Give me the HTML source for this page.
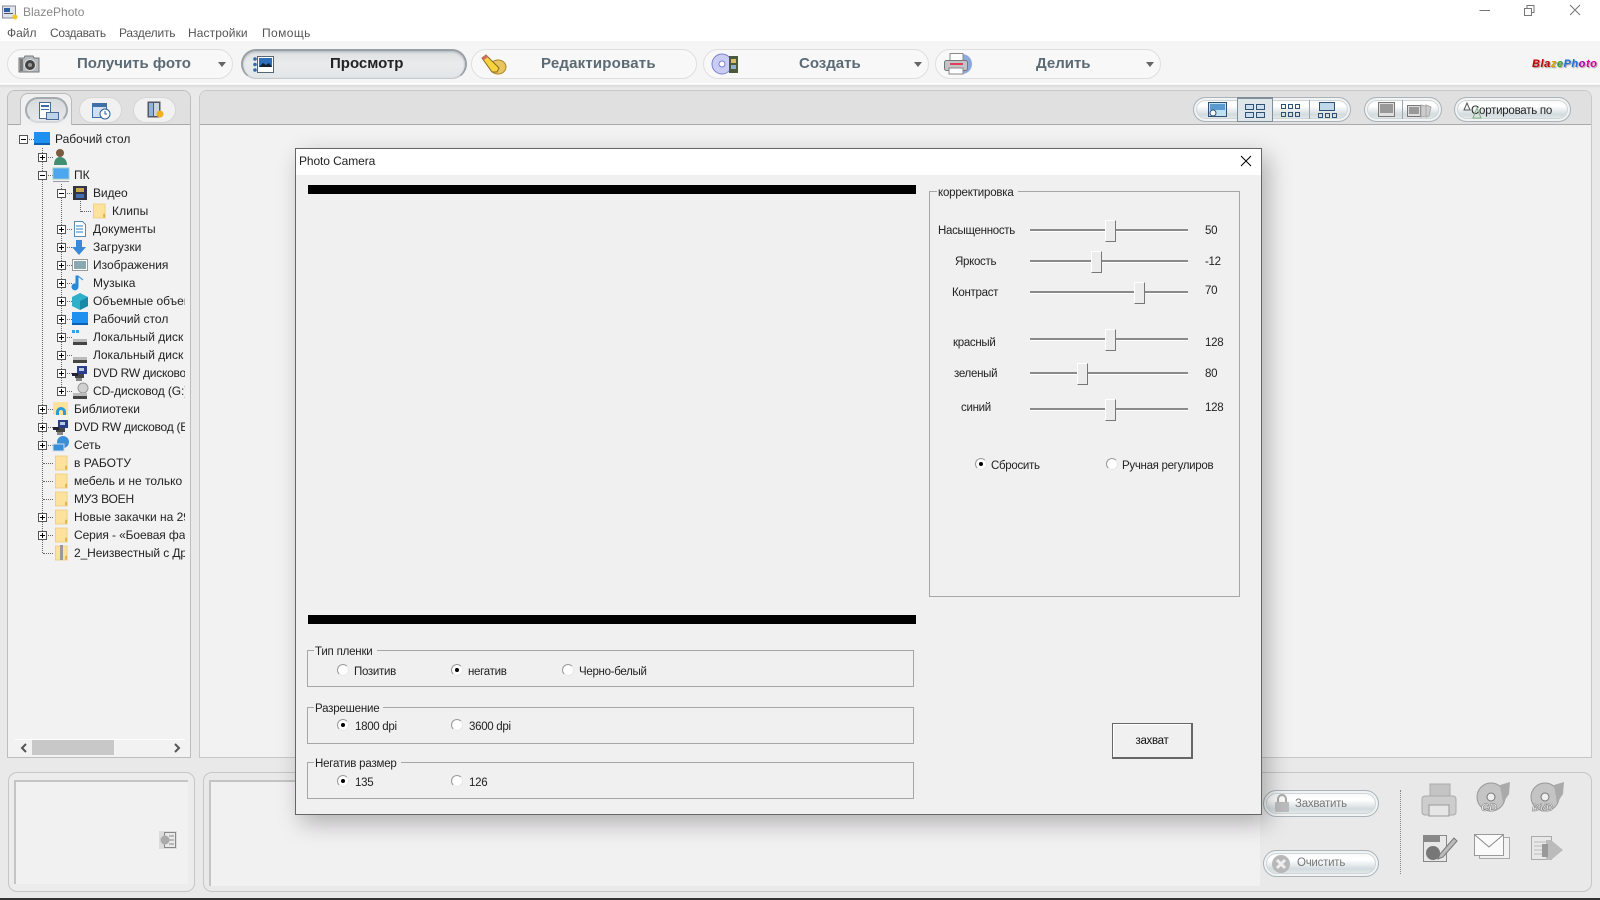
<!DOCTYPE html>
<html lang="ru"><head><meta charset="utf-8"><title>BlazePhoto</title>
<style>
*{box-sizing:border-box}
html,body{margin:0;padding:0;width:1600px;height:900px;overflow:hidden;background:#e9e9e9;font:12px/16px "Liberation Sans","Noto Sans CJK SC",sans-serif;color:#222}
.a,.t,.r,.e,.pill,.gl,.s,.th,.gb{position:absolute}
.t{white-space:nowrap}
.d{font-size:11.5px;letter-spacing:-.3px;margin-top:1px}
.pill{top:49px;height:30px;width:226px;border:1px solid #dfdfdf;border-radius:15px;background:#f8f8f8}
.pt{position:absolute;top:55px;font-weight:bold;font-size:15px;line-height:18px;color:#5b6a75;white-space:nowrap}
.arr{position:absolute;top:62px;width:0;height:0;border:4px solid transparent;border-top:5px solid #666;border-bottom:0}
.gl{border:1px solid #a9b3b8;border-radius:14px;box-shadow:inset 0 0 0 2px #f2f4f4,inset 0 0 0 3px #cfd6d9;background:linear-gradient(#f6f7f7 0,#fff 35%,#d3dbde 72%,#eef1f1 100%)}
.s{left:1030px;width:158px;height:3px;background:#8a8a8a;border-bottom:1px solid #fff}
.th{width:11px;height:22px;background:#ececec;border:1px solid;border-color:#fff #777 #777 #fff}
.r{width:12px;height:12px;border-radius:50%;background:#fff;border:1px solid #999;border-right-color:#e8e8e8;border-bottom-color:#e8e8e8}
.r.on::after{content:"";position:absolute;left:3px;top:3px;width:4px;height:4px;border-radius:50%;background:#000}
.gb{border:1px solid #a6a6a6}
.lg{position:absolute;background:#f0f0f0;padding:0 4px 0 1px;white-space:nowrap;color:#222;font-size:11.5px;letter-spacing:-.2px;margin-top:1px}
.e{width:9px;height:9px;border:1px solid #555;background:#fff}
.e::before{content:"";position:absolute;left:1px;top:3px;width:5px;height:1px;background:#000}
.e.p::after{content:"";position:absolute;left:3px;top:1px;width:1px;height:5px;background:#000}
.dv{position:absolute;border-left:1px dotted #666}
.dh{position:absolute;border-top:1px dotted #666;height:0}
#tree .t{color:#222}
</style></head><body>

<svg width="0" height="0" style="position:absolute"><defs>
<symbol id="fold" viewBox="0 0 14 16"><rect x="0.5" y="0.5" width="12.5" height="15" fill="#fce29a" stroke="#ecd084"/><rect x="11" y="11" width="2" height="4" fill="#e0b040"/></symbol>
<symbol id="desk" viewBox="0 0 16 14"><rect width="16" height="12" fill="#1e90f0"/><rect y="11" width="16" height="2" fill="#0f5fb0"/></symbol>
<symbol id="dvd" viewBox="0 0 16 16"><rect x="5" y="1" width="10" height="8" fill="#2a3f8c"/><rect x="7" y="3" width="5" height="3" fill="#bcd"/><rect x="3" y="9" width="9" height="4" fill="#444"/><rect x="0" y="8" width="6" height="3" fill="#223"/><rect x="4" y="13" width="6" height="3" fill="#888"/></symbol>
<symbol id="hdd" viewBox="0 0 16 16"><rect x="1" y="9" width="14" height="3" fill="#bbb"/><rect x="1" y="12" width="14" height="3" fill="#444"/></symbol>
</defs></svg>

<!-- title bar -->
<div class="a" style="left:0;top:0;width:1600px;height:41px;background:#fff"></div>
<svg class="a" style="left:2px;top:4px" width="16" height="16"><rect x="0.5" y="2" width="13" height="12" fill="#dfe4ea" stroke="#889"/><rect x="2" y="4" width="6" height="4" fill="#2b5f9e"/><rect x="2" y="9" width="9" height="1" fill="#556"/><circle cx="13" cy="13" r="2.500" fill="#f3c623"/></svg>
<div class="t" style="left:23px;top:4px;color:#888;font-size:12px">BlazePhoto</div>
<div class="t" style="left:7px;top:25px;color:#555">Файл</div>
<div class="t" style="left:50px;top:25px;color:#555;letter-spacing:-.3px">Создавать</div>
<div class="t" style="left:119px;top:25px;color:#555;letter-spacing:-.2px">Разделить</div>
<div class="t" style="left:188px;top:25px;color:#555;letter-spacing:.1px">Настройки</div>
<div class="t" style="left:262px;top:25px;color:#555;letter-spacing:.4px">Помощь</div>
<svg class="a" style="left:1470px;top:0" width="130" height="20" fill="none" stroke="#777"><path d="M9.500 10.500H20"/><rect x="54.500" y="8.500" width="7" height="7"/><path d="M57 8V5.500H64V12.500H61.500"/><path d="M100 5l10 10M110 5l-10 10"/></svg>

<!-- toolbar -->
<div class="a" style="left:0;top:41px;width:1600px;height:42px;background:#f5f5f5"></div>
<div class="a" style="left:0;top:83px;width:1600px;height:5px;background:linear-gradient(#fff 0,#fff 30%,#d8d8d8 40%,#e9e9e9 100%)"></div>

<div class="pill" style="left:7px"></div>
<div class="pt" style="left:77px">Получить фото</div>
<div class="arr" style="left:218px"></div>
<svg class="a" style="left:17px;top:53px" width="24" height="20"><path d="M2 5h5l1-2h8l1 2h5v14H2z" fill="#b6bbbf" stroke="#777"/><circle cx="13" cy="12" r="5.500" fill="#444" stroke="#ddd"/><circle cx="13" cy="12" r="2" fill="#999"/><rect x="3" y="6" width="3" height="12" fill="#777"/></svg>

<div class="pill" style="left:241px;width:226px;background:linear-gradient(#dde0e2,#e9ebec 45%,#e3e6e8);border:2px solid #9aa1a6;border-bottom:1px solid #c4c9cc;box-shadow:inset 0 1px 2px #b0b5b8"></div>
<div class="pt" style="left:330px;color:#222">Просмотр</div>
<svg class="a" style="left:252px;top:55px" width="23" height="19"><rect x="5.500" y="1.500" width="16" height="16" fill="#fff" stroke="#567"/><rect x="7" y="3" width="13" height="9" fill="#2d6fb8"/><path d="M7 12l4-4 3 2 3-2 3 4z" fill="#123"/><circle cx="3" cy="4" r="1.800" fill="#3569b0"/><circle cx="3" cy="9.500" r="1.800" fill="#3569b0"/><circle cx="3" cy="15" r="1.800" fill="#3569b0"/></svg>

<div class="pill" style="left:471px"></div>
<div class="pt" style="left:541px;letter-spacing:.2px">Редактировать</div>
<svg class="a" style="left:480px;top:53px" width="28" height="22"><ellipse cx="18" cy="14" rx="8" ry="7" fill="#e8c560" stroke="#a98525"/><path d="M2 5l4-3 13 13-2 4-5 0z" fill="#f6d33f" stroke="#8b6a1a"/><path d="M2 5l4-3 2 2-4 3z" fill="#d96a6a"/></svg>

<div class="pill" style="left:703px"></div>
<div class="pt" style="left:799px">Создать</div>
<div class="arr" style="left:914px"></div>
<svg class="a" style="left:711px;top:52px" width="28" height="24"><circle cx="11" cy="12" r="10" fill="#c9cdf5" stroke="#7a80c8"/><circle cx="11" cy="12" r="3" fill="#fff" stroke="#7a80c8"/><rect x="18" y="4" width="9" height="17" fill="#4a5a3a"/><rect x="20" y="7" width="5" height="4" fill="#d8c060"/><rect x="20" y="13" width="5" height="4" fill="#8fb0d0"/></svg>

<div class="pill" style="left:935px;width:226px"></div>
<div class="pt" style="left:1036px">Делить</div>
<div class="arr" style="left:1146px"></div>
<svg class="a" style="left:943px;top:52px" width="30" height="24"><circle cx="19" cy="12" r="10" fill="#8fa8dc"/><rect x="7" y="1.500" width="13" height="8" fill="#fff" stroke="#888"/><rect x="1.500" y="8.500" width="23" height="10" rx="2" fill="#c4c4c8" stroke="#777"/><rect x="7" y="11" width="13" height="2" fill="#e0405a"/><rect x="6" y="16" width="14" height="6" fill="#fff" stroke="#888"/></svg>

<div class="t" style="left:1532px;top:57px;font:italic bold 11px/14px 'Liberation Sans',sans-serif;letter-spacing:.55px;text-shadow:1px 1px 1px #999"><span style="color:#c00000">Bla</span><span style="color:#d8a000">z</span><span style="color:#30a030">e</span><span style="color:#2070e0">Ph</span><span style="color:#b000b0">o</span><span style="color:#e000a0">to</span></div>

<!-- left panel -->
<div class="a" style="left:7px;top:90px;width:184px;height:668px;background:#f2f2f2;border:1px solid #bdbdbd;border-radius:8px 8px 0 0"></div>
<div class="a" style="left:8px;top:91px;width:182px;height:33px;background:#e0e0e0;border-radius:7px 7px 0 0"></div>
<div class="a" style="left:8px;top:124px;width:182px;height:1px;background:#aaa"></div>
<div class="a" style="left:20px;top:93px;width:52px;height:32px;background:#f0f0f0;border:1px solid #bbb;border-bottom:0;border-radius:8px 8px 0 0"></div>
<div class="a" style="left:25px;top:97px;width:43px;height:26px;border-radius:13px;background:linear-gradient(#d8dbdd,#e6e8e9);border:2px solid #a4aaae;border-bottom-color:#d4d8da"></div>
<div class="a" style="left:79px;top:97px;width:43px;height:26px;border-radius:13px;background:#f1f1f1;border:1px solid #d6d6d6"></div>
<div class="a" style="left:133px;top:97px;width:43px;height:26px;border-radius:13px;background:#f1f1f1;border:1px solid #d6d6d6"></div>
<svg class="a" style="left:38px;top:101px" width="22" height="20"><rect x="1.500" y="1.500" width="11" height="16" fill="#fff" stroke="#4a6a90"/><rect x="3" y="4" width="8" height="2" fill="#3a6ea8"/><rect x="3" y="8" width="8" height="1" fill="#3a6ea8"/><rect x="8.500" y="11.500" width="12" height="7" fill="#bcd4ea" stroke="#4a6a90"/></svg>
<svg class="a" style="left:91px;top:100px" width="21" height="20"><rect x="1.500" y="3.500" width="14" height="14" fill="#cfe0f2" stroke="#3f6fa8"/><rect x="2" y="4" width="13" height="3" fill="#3f6fa8"/><circle cx="14" cy="14" r="5" fill="#fff" stroke="#2a5f9a"/><path d="M14 11v3h2" stroke="#2a5f9a" fill="none"/></svg>
<svg class="a" style="left:146px;top:100px" width="20" height="20"><rect x="1.500" y="1.500" width="13" height="16" fill="#556"/><rect x="3" y="3" width="4" height="13" fill="#8fb4d8"/><rect x="8" y="3" width="5" height="13" fill="#c8d4de"/><circle cx="14" cy="14" r="3.500" fill="#f0b020"/></svg>

<!-- tree -->
<div id="tree" class="a" style="left:0;top:125px;width:185px;height:440px;overflow:hidden">
<div style="position:absolute;left:0;top:-125px;width:185px;height:600px">
<div class="dv" style="left:42px;top:148px;height:405px"></div>
<div class="dv" style="left:61px;top:184px;height:207px"></div>
<div class="dv" style="left:80px;top:198px;height:14px"></div>
<div class="dh" style="left:27px;top:139px;width:7px"></div>
<div class="dh" style="left:46px;top:157px;width:7px"></div><div class="dh" style="left:46px;top:175px;width:7px"></div>
<div class="dh" style="left:46px;top:409px;width:7px"></div><div class="dh" style="left:46px;top:427px;width:7px"></div><div class="dh" style="left:46px;top:445px;width:7px"></div>
<div class="dh" style="left:43px;top:463px;width:10px"></div><div class="dh" style="left:43px;top:481px;width:10px"></div><div class="dh" style="left:43px;top:499px;width:10px"></div>
<div class="dh" style="left:46px;top:517px;width:7px"></div><div class="dh" style="left:46px;top:535px;width:7px"></div><div class="dh" style="left:43px;top:553px;width:10px"></div>
<div class="dh" style="left:65px;top:193px;width:7px"></div><div class="dh" style="left:81px;top:211px;width:10px"></div>
<div class="dh" style="left:65px;top:229px;width:7px"></div><div class="dh" style="left:65px;top:247px;width:7px"></div><div class="dh" style="left:65px;top:265px;width:7px"></div><div class="dh" style="left:65px;top:283px;width:7px"></div><div class="dh" style="left:65px;top:301px;width:7px"></div><div class="dh" style="left:65px;top:319px;width:7px"></div><div class="dh" style="left:65px;top:337px;width:7px"></div><div class="dh" style="left:65px;top:355px;width:7px"></div><div class="dh" style="left:65px;top:373px;width:7px"></div><div class="dh" style="left:65px;top:391px;width:7px"></div>

<div class="e" style="left:19px;top:135px"></div>
<div class="e p" style="left:38px;top:153px"></div>
<div class="e" style="left:38px;top:171px"></div>
<div class="e" style="left:57px;top:189px"></div>
<div class="e p" style="left:57px;top:225px"></div><div class="e p" style="left:57px;top:243px"></div><div class="e p" style="left:57px;top:261px"></div><div class="e p" style="left:57px;top:279px"></div><div class="e p" style="left:57px;top:297px"></div><div class="e p" style="left:57px;top:315px"></div><div class="e p" style="left:57px;top:333px"></div><div class="e p" style="left:57px;top:351px"></div><div class="e p" style="left:57px;top:369px"></div><div class="e p" style="left:57px;top:387px"></div>
<div class="e p" style="left:38px;top:405px"></div><div class="e p" style="left:38px;top:423px"></div><div class="e p" style="left:38px;top:441px"></div><div class="e p" style="left:38px;top:513px"></div><div class="e p" style="left:38px;top:531px"></div>

<svg class="a" style="left:0;top:0" width="185" height="600">
<use href="#desk" x="34" y="132" width="16" height="14"/>
<circle cx="60" cy="153" r="4" fill="#7a5a40"/><path d="M54 165c0-6 3-8 6-8s7 2 7 8z" fill="#3f8f70"/>
<rect x="53" y="168" width="16" height="11" fill="#4da6ee" stroke="#9cc"/><rect x="53" y="181" width="16" height="1" fill="#99a"/>
<rect x="73" y="186" width="14" height="14" fill="#334"/><rect x="76" y="188" width="8" height="4" fill="#c8a850"/><rect x="76" y="194" width="8" height="4" fill="#3f6fb0"/>
<use href="#fold" x="93" y="203" width="13" height="16"/>
<path d="M74.500 221.500h8l3 3v12h-11z" fill="#fff" stroke="#5a8ab0"/><path d="M76 226h7M76 229h7M76 232h7" stroke="#2a7fc0"/>
<path d="M76 240h6v7h4l-7 8-7-8h4z" fill="#3a88d8"/>
<rect x="72.500" y="259.500" width="15" height="11" fill="#fff" stroke="#999"/><rect x="74" y="261" width="12" height="8" fill="#8aa8b0"/>
<path d="M78 276v11a3 3 0 1 1-2-3v-8zl5 4" fill="#2a88d8" stroke="#2a88d8"/>
<path d="M72 297l8-4 8 4v9l-8 4-8-4z" fill="#30b0c8"/><path d="M80 301l8-4v9l-8 4z" fill="#188aa8"/>
<use href="#desk" x="72" y="312" width="16" height="14"/>
<rect x="72" y="330" width="3" height="3" fill="#30a0e8"/><rect x="76" y="330" width="3" height="3" fill="#30a0e8"/><use href="#hdd" x="72" y="330" width="16" height="16"/>
<use href="#hdd" x="72" y="348" width="16" height="16"/>
<use href="#dvd" x="72" y="365" width="16" height="16"/>
<circle cx="83" cy="388" r="5" fill="#d0d0d0" stroke="#999"/><use href="#hdd" x="72" y="384" width="16" height="16"/>
<rect x="53" y="402" width="15" height="13" fill="#fce29a"/><path d="M56 415v-3a5 5 0 0 1 10 0v3h-3v-3a2 2 0 0 0-4 0v3z" fill="#2a9ad8"/>
<use href="#dvd" x="53" y="419" width="16" height="16"/>
<circle cx="63" cy="442" r="6" fill="#3a90d8"/><rect x="53" y="444" width="11" height="7" fill="#3a90d8" stroke="#cde"/>
<use href="#fold" x="55" y="455" width="13" height="16"/>
<use href="#fold" x="55" y="473" width="13" height="16"/>
<use href="#fold" x="55" y="491" width="13" height="16"/>
<use href="#fold" x="55" y="509" width="13" height="16"/>
<use href="#fold" x="55" y="527" width="13" height="16"/>
<use href="#fold" x="55" y="545" width="13" height="16"/><rect x="60" y="545" width="3" height="15" fill="#999"/>
</svg>

<div class="t" style="left:55px;top:131px">Рабочий стол</div>
<div class="t" style="left:74px;top:167px">ПК</div>
<div class="t" style="left:93px;top:185px;letter-spacing:-.1px">Видео</div>
<div class="t" style="left:112px;top:203px;letter-spacing:.1px">Клипы</div>
<div class="t" style="left:93px;top:221px;letter-spacing:.1px">Документы</div>
<div class="t" style="left:93px;top:239px">Загрузки</div>
<div class="t" style="left:93px;top:257px">Изображения</div>
<div class="t" style="left:93px;top:275px">Музыка</div>
<div class="t" style="left:93px;top:293px">Объемные объекты</div>
<div class="t" style="left:93px;top:311px">Рабочий стол</div>
<div class="t" style="left:93px;top:329px">Локальный диск (C:)</div>
<div class="t" style="left:93px;top:347px">Локальный диск (D:)</div>
<div class="t" style="left:93px;top:365px;letter-spacing:-.25px">DVD RW дисковод</div>
<div class="t" style="left:93px;top:383px;letter-spacing:-.1px">CD-дисковод (G:)</div>
<div class="t" style="left:74px;top:401px;letter-spacing:.1px">Библиотеки</div>
<div class="t" style="left:74px;top:419px;letter-spacing:-.25px">DVD RW дисковод (E:)</div>
<div class="t" style="left:74px;top:437px">Сеть</div>
<div class="t" style="left:74px;top:455px">в РАБОТУ</div>
<div class="t" style="left:74px;top:473px">мебель и не только</div>
<div class="t" style="left:74px;top:491px;letter-spacing:-.2px">МУЗ ВОЕН</div>
<div class="t" style="left:74px;top:509px">Новые закачки на 29</div>
<div class="t" style="left:74px;top:527px;letter-spacing:-.1px">Серия - «Боевая фантастика»</div>
<div class="t" style="left:74px;top:545px;letter-spacing:-.1px">2_Неизвестный с Дрозд</div>
</div></div>

<!-- tree scrollbar -->
<div class="a" style="left:15px;top:739px;width:170px;height:1px;background:#fff"></div>
<div class="a" style="left:32px;top:740px;width:82px;height:15px;background:#c8c8c8"></div>
<svg class="a" style="left:18px;top:742px" width="166" height="12" fill="none" stroke="#555" stroke-width="2"><path d="M8 2L4 6l4 4M157 2l4 4-4 4"/></svg>

<!-- main panel -->
<div class="a" style="left:199px;top:90px;width:1393px;height:668px;background:#f2f2f2;border:1px solid #c8c8c8;border-radius:8px 8px 0 0"></div>
<div class="a" style="left:200px;top:91px;width:1391px;height:33px;background:#e0e0e0;border-radius:7px 7px 0 0"></div>
<div class="a" style="left:200px;top:124px;width:1391px;height:1px;background:#aaa"></div>

<!-- view toolbar -->
<div class="gl" style="left:1193px;top:97px;width:158px;height:25px"></div>
<div class="a" style="left:1237px;top:97px;width:36px;height:25px;background:#dfe6ea;border:1px solid #7f8f99;border-top-width:2px"></div>
<div class="a" style="left:1309px;top:100px;width:1px;height:19px;background:#9aa5ab"></div>
<svg class="a" style="left:1207px;top:101px" width="156" height="18" fill="none" stroke="#2f4f73">
<rect x="1.500" y="1.500" width="18" height="14" fill="#bfe0f0"/><rect x="3" y="3" width="15" height="6" fill="#5a9ad0" stroke="none"/><circle cx="6" cy="12" r="3" fill="#fff"/>
<rect x="38.500" y="3.500" width="8" height="5" fill="#cde"/><rect x="49.500" y="3.500" width="8" height="5" fill="#cde"/><rect x="38.500" y="11.500" width="8" height="5" fill="#cde"/><rect x="49.500" y="11.500" width="8" height="5" fill="#cde"/>
<rect x="74.500" y="3.500" width="4" height="4"/><rect x="81.500" y="3.500" width="4" height="4"/><rect x="88.500" y="3.500" width="4" height="4"/><rect x="74.500" y="11.500" width="4" height="4"/><rect x="81.500" y="11.500" width="4" height="4"/><rect x="88.500" y="11.500" width="4" height="4"/>
<rect x="112.500" y="1.500" width="15" height="8" fill="#bfd8ea"/><rect x="111.500" y="12.500" width="4" height="4"/><rect x="118.500" y="12.500" width="4" height="4"/><rect x="125.500" y="12.500" width="4" height="4"/>
</svg>
<div class="gl" style="left:1364px;top:97px;width:78px;height:25px"></div>
<div class="a" style="left:1402px;top:100px;width:1px;height:19px;background:#9aa5ab"></div>
<svg class="a" style="left:1376px;top:101px" width="60" height="18"><rect x="2.500" y="1.500" width="16" height="14" fill="#e0e0e0" stroke="#777"/><rect x="4" y="3" width="13" height="9" fill="#999"/><rect x="31.500" y="4.500" width="13" height="11" fill="#ddd" stroke="#777"/><rect x="33" y="6" width="10" height="7" fill="#999"/><path d="M45 4l5 1v10l-5 1zM50 4l5 2-2 9-3 1z" fill="#ccc" stroke="#aaa"/></svg>
<div class="gl" style="left:1454px;top:97px;width:117px;height:25px"></div>
<div class="t" style="left:1471px;top:103px;color:#222;font-size:11.5px;letter-spacing:-.25px">Сортировать по</div>
<svg class="a" style="left:1462px;top:101px" width="24" height="18" fill="none"><path d="M2 9l3-7 3 7z" stroke="#555"/><path d="M11 17l4-10 4 10z" stroke="#7fae7f"/></svg>

<!-- bottom panels -->
<div class="a" style="left:8px;top:772px;width:187px;height:120px;background:#ececec;border:1px solid #c6c6c6;border-radius:9px"></div>
<div class="a" style="left:14px;top:780px;width:174px;height:104px;background:#f2f1f2;border:2px solid #c4c4c4;border-right:0;border-bottom:0"></div>
<svg class="a" style="left:159px;top:831px" width="18" height="18"><rect width="18" height="18" fill="#dcdcdc"/><rect x="5.500" y="1.500" width="11" height="15" fill="#e8e8e8" stroke="#888"/><path d="M10 5h5M10 9h5M10 13h5" stroke="#888"/><circle cx="6" cy="9" r="4.500" fill="#aaa"/></svg>

<div class="a" style="left:203px;top:772px;width:1389px;height:120px;background:#e9e9e9;border:1px solid #c6c6c6;border-radius:9px"></div>
<div class="a" style="left:209px;top:780px;width:1051px;height:106px;background:#f2f1f2;border:2px solid #c4c4c4;border-right:0;border-bottom:0"></div>

<div class="gl" style="left:1263px;top:790px;width:116px;height:27px"></div>
<svg class="a" style="left:1273px;top:792px" width="18" height="22"><path d="M5 10V7a4 4 0 0 1 8 0v3" fill="none" stroke="#aaa" stroke-width="2"/><rect x="2" y="10" width="14" height="10" rx="1" fill="#bdbdbd"/></svg>
<div class="t" style="left:1295px;top:796px;color:#777;font-size:11.5px;letter-spacing:-.25px">Захватить</div>
<div class="gl" style="left:1263px;top:850px;width:116px;height:27px"></div>
<svg class="a" style="left:1271px;top:854px" width="20" height="20"><circle cx="10" cy="10" r="9" fill="#b8b8b8"/><path d="M6 6l8 8M14 6l-8 8" stroke="#eee" stroke-width="3"/></svg>
<div class="t" style="left:1297px;top:855px;color:#777;font-size:11.5px;letter-spacing:-.25px">Очистить</div>
<div class="a" style="left:1400px;top:790px;height:84px;border-left:1px dotted #888"></div>

<svg class="a" style="left:1420px;top:780px" width="150" height="90">
<rect x="10" y="4" width="20" height="14" fill="#c4c4c4" stroke="#aaa"/><rect x="2" y="16" width="34" height="19" rx="3" fill="#cdcdcd" stroke="#aaa"/><rect x="9" y="25" width="20" height="11" fill="#e6e6e6" stroke="#999"/>
<circle cx="71" cy="17" r="14" fill="#c4c4c4" stroke="#999"/><circle cx="71" cy="17" r="4" fill="#eee" stroke="#777"/><path d="M80 5l10-3-1 12-6 9z" fill="#aaa"/><text x="61" y="31" font-family="Liberation Sans" font-size="11" font-weight="bold" font-style="italic" fill="#eee" stroke="#777" stroke-width=".5">CD</text>
<circle cx="125" cy="17" r="14" fill="#c4c4c4" stroke="#999"/><circle cx="125" cy="17" r="4" fill="#eee" stroke="#777"/><path d="M134 5l10-3-1 12-6 9z" fill="#aaa"/><text x="112" y="31" font-family="Liberation Sans" font-size="10" font-weight="bold" font-style="italic" fill="#eee" stroke="#777" stroke-width=".5">DVD</text>
<rect x="3.500" y="55.500" width="23" height="26" fill="#e8e8e8" stroke="#888"/><rect x="4" y="56" width="16" height="6" fill="#888"/><circle cx="13" cy="73" r="7" fill="#777"/><path d="M34 58L20 74l-2 5 5-2 14-16z" fill="#bbb" stroke="#777"/>
<rect x="59.500" y="57.500" width="30" height="21" fill="#f2f2f2" stroke="#aaa"/><rect x="54.500" y="54.500" width="29" height="21" fill="#fafafa" stroke="#999"/><path d="M55 55l14 12 14-12" fill="none" stroke="#888"/>
<rect x="111.500" y="56.500" width="20" height="23" fill="#e8e8e8" stroke="#aaa"/><path d="M114 62h14M114 66h14M114 70h14M114 74h14" stroke="#bbb"/><path d="M126 60l5 0 12 10-12 10h-5z" fill="#bbb"/><rect x="122" y="64" width="6" height="13" fill="#999"/>
</svg>

<div class="a" style="left:0;top:898px;width:1600px;height:2px;background:#333"></div>

<!-- dialog -->
<div class="a" style="left:295px;top:148px;width:967px;height:667px;background:#f0f0f0;border:1px solid #666;box-shadow:6px 8px 22px rgba(0,0,0,.28)">
<div class="a" style="left:0;top:0;width:965px;height:26px;background:#fff"></div>
</div>
<div class="t" style="left:299px;top:153px;color:#222;letter-spacing:-.1px">Photo Camera</div>
<svg class="a" style="left:1240px;top:155px" width="12" height="12" fill="none" stroke="#000"><path d="M1 1l10 10M11 1L1 11"/></svg>

<div class="a" style="left:308px;top:185px;width:608px;height:9px;background:#000"></div>
<div class="a" style="left:308px;top:615px;width:608px;height:9px;background:#000"></div>

<div class="gb" style="left:929px;top:191px;width:311px;height:406px"></div>
<div class="lg" style="left:937px;top:184px">корректировка</div>

<div class="t d" style="left:938px;top:222px">Насыщенность</div>
<div class="t d" style="left:955px;top:253px">Яркость</div>
<div class="t d" style="left:952px;top:284px">Контраст</div>
<div class="t d" style="left:953px;top:334px">красный</div>
<div class="t d" style="left:954px;top:365px">зеленый</div>
<div class="t d" style="left:961px;top:399px">синий</div>
<div class="t d" style="left:1205px;top:222px">50</div>
<div class="t d" style="left:1205px;top:253px">-12</div>
<div class="t d" style="left:1205px;top:282px">70</div>
<div class="t d" style="left:1205px;top:334px">128</div>
<div class="t d" style="left:1205px;top:365px">80</div>
<div class="t d" style="left:1205px;top:399px">128</div>

<div class="s" style="top:229px"></div><div class="th" style="left:1105px;top:220px"></div>
<div class="s" style="top:260px"></div><div class="th" style="left:1091px;top:251px"></div>
<div class="s" style="top:291px"></div><div class="th" style="left:1134px;top:282px"></div>
<div class="s" style="top:338px"></div><div class="th" style="left:1105px;top:329px"></div>
<div class="s" style="top:372px"></div><div class="th" style="left:1077px;top:363px"></div>
<div class="s" style="top:408px"></div><div class="th" style="left:1105px;top:399px"></div>

<div class="r on" style="left:975px;top:458px"></div>
<div class="t d" style="left:991px;top:457px">Сбросить</div>
<div class="r" style="left:1106px;top:458px"></div>
<div class="t d" style="left:1122px;top:457px;width:92px;overflow:hidden">Ручная регулировка</div>

<div class="gb" style="left:307px;top:650px;width:607px;height:37px"></div>
<div class="lg" style="left:314px;top:643px">Тип пленки</div>
<div class="r" style="left:337px;top:664px"></div><div class="t d" style="left:354px;top:663px">Позитив</div>
<div class="r on" style="left:451px;top:664px"></div><div class="t d" style="left:468px;top:663px">негатив</div>
<div class="r" style="left:562px;top:664px"></div><div class="t d" style="left:579px;top:663px">Черно-белый</div>

<div class="gb" style="left:307px;top:707px;width:607px;height:37px"></div>
<div class="lg" style="left:314px;top:700px">Разрешение</div>
<div class="r on" style="left:337px;top:719px"></div><div class="t d" style="left:355px;top:718px">1800 dpi</div>
<div class="r" style="left:451px;top:719px"></div><div class="t d" style="left:469px;top:718px">3600 dpi</div>

<div class="gb" style="left:307px;top:762px;width:607px;height:37px"></div>
<div class="lg" style="left:314px;top:755px">Негатив размер</div>
<div class="r on" style="left:337px;top:775px"></div><div class="t d" style="left:355px;top:774px">135</div>
<div class="r" style="left:451px;top:775px"></div><div class="t d" style="left:469px;top:774px">126</div>

<div class="a d" style="left:1112px;top:723px;margin-top:0;width:81px;height:36px;background:#f0f0f0;border:1px solid #666;border-right-width:2px;border-bottom-width:2px;box-shadow:inset 1px 1px 0 #fff;text-align:center;line-height:35px;color:#111">захват</div>

</body></html>
